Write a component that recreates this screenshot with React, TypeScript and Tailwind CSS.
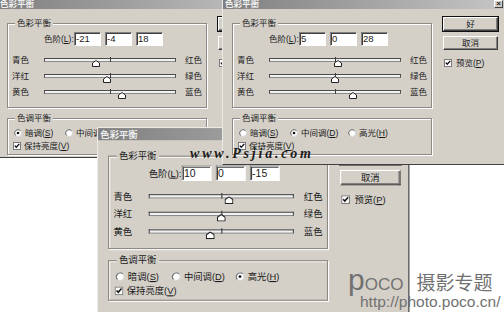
import React from "react";

type DialogProps = {
  values: [number, number, number];
  tone: number;
  className: string;
};

const sliderRows = [
  ["青色", "红色"],
  ["洋红", "绿色"],
  ["黄色", "蓝色"],
];

function CheckBox() {
  return (
    <svg width="8" height="8" viewBox="0 0 8 8" className="shrink-0">
      <rect x="0.5" y="0.5" width="7" height="7" fill="#fff" stroke="#7a7a7a" />
      <path d="M1.8 3.6 L3.3 5.3 L6.3 1.9" fill="none" stroke="#111" strokeWidth="1.4" />
    </svg>
  );
}

function Radio({ on }: { on: boolean }) {
  return (
    <svg width="8" height="8" viewBox="0 0 8 8" className="shrink-0">
      <circle cx="4" cy="4" r="3.5" fill="#fff" stroke="#d8d8d8" />
      <path d="M1.53 6.47 A3.5 3.5 0 0 1 6.47 1.53" fill="none" stroke="#6a6a6a" />
      {on && <circle cx="4" cy="4" r="1.3" fill="#111" />}
    </svg>
  );
}

function Slider({ value }: { value: number }) {
  return (
    <div className="relative w-[132px] h-[4px]">
      <div className="h-full border border-[#4a4a4a] border-b-[#8a8a8a] bg-[#f2f2f2]" />
      <div className="absolute left-[66px] top-[-1px] w-px h-[5px] bg-[#3a3a3a]" />
      <svg
        width="8"
        height="7"
        viewBox="0 0 8 7"
        className="absolute top-[2px]"
        style={{ left: 66 + value * 0.66 - 4 }}
      >
        <path d="M4 0.5 L7.5 3 L7.5 6.5 L0.5 6.5 L0.5 3 Z" fill="#fff" stroke="#222" />
      </svg>
    </div>
  );
}

function Button({ label, primary }: { label: string; primary?: boolean }) {
  return (
    <div
      className={`w-[55px] h-[14px] flex items-center justify-center bg-[#d4d0c8] border border-t-white border-l-white border-r-[#404040] border-b-[#404040] text-[8.5px] leading-none ${
        primary
          ? "shadow-[0_0_0_1px_#111,inset_-1px_-1px_0_#808080]"
          : "shadow-[inset_-1px_-1px_0_#808080]"
      }`}
    >
      {label}
    </div>
  );
}

function Dialog({ values, tone, className }: DialogProps) {
  const tones = [
    ["暗调(", "S", ")", "w-[51px]"],
    ["中间调(", "D", ")", "w-[58px]"],
    ["高光(", "H", ")", ""],
  ];
  return (
    <div
      className={`absolute w-[284px] bg-[#d4d0c8] border border-t-[#ebe9e4] border-l-[#ebe9e4] border-r-[#404040] border-b-[#404040] text-[#1a1a1a] ${className}`}
    >
      <div className="h-[11px] flex items-end justify-between px-[2px] pb-[1px] bg-linear-to-r from-[#808080] to-[#c6c6c6]">
        <span className="text-[8.5px] leading-none font-bold text-[#eeeeee]">色彩平衡</span>
        <div className="w-[9px] h-[8px] flex items-center justify-center bg-[#d4d0c8] border border-t-white border-l-white border-r-[#404040] border-b-[#404040] text-[8px] leading-none font-bold">
          ×
        </div>
      </div>

      <div className="flex pl-[9px]">
        <div className="w-[200px] pt-[9px]">
          <fieldset className="w-[200px] border border-[#8d8a85] shadow-[1px_1px_0_#fff,inset_1px_1px_0_#fff] pb-[7px]">
            <legend className="ml-[7px] px-[2px] text-[8.5px] leading-[10px] bg-[#d4d0c8]">色彩平衡</legend>
            <div className="mt-[4px] h-[14px] flex items-center pl-[36px]">
              <span className="w-[30px] text-[8.5px] leading-none whitespace-nowrap">
                色阶(<span className="underline">L</span>):
              </span>
              <div className="flex gap-[4px]">
                {values.map((v, i) => (
                  <div
                    key={i}
                    className="w-[27px] h-[14px] bg-white border border-t-[#808080] border-l-[#808080] border-b-white border-r-white shadow-[inset_1px_1px_0_#404040] pl-[1px] text-[9.5px] leading-[12px]"
                  >
                    {v}
                  </div>
                ))}
              </div>
            </div>
            <div className="mt-[6px]">
              {sliderRows.map(([left, right], i) => (
                <div key={left} className="h-[16px] flex items-center pl-[4px]">
                  <span className="w-[32px] text-[8.5px] leading-none">{left}</span>
                  <Slider value={values[i]} />
                  <span className="ml-[9px] text-[8.5px] leading-none">{right}</span>
                </div>
              ))}
            </div>
          </fieldset>

          <fieldset className="mt-[5px] w-[200px] border border-[#8d8a85] shadow-[1px_1px_0_#fff,inset_1px_1px_0_#fff] pb-[2px]">
            <legend className="ml-[7px] px-[2px] text-[8.5px] leading-[10px] bg-[#d4d0c8]">色调平衡</legend>
            <div className="mt-[4px] h-[12px] flex items-center pl-[6px]">
              {tones.map(([a, k, b, w], i) => (
                <div key={k} className={`flex items-center gap-[3px] ${w}`}>
                  <Radio on={i === tone} />
                  <span className="text-[8.5px] leading-none whitespace-nowrap">
                    {a}
                    <span className="underline">{k}</span>
                    {b}
                  </span>
                </div>
              ))}
            </div>
            <div className="mt-[1px] h-[12px] flex items-center gap-[3px] pl-[5px]">
              <CheckBox />
              <span className="text-[8.5px] leading-none">
                保持亮度(<span className="underline">V</span>)
              </span>
            </div>
          </fieldset>
        </div>

        <div className="ml-[11px] pt-[8px] flex flex-col">
          <Button label="好" primary />
          <div className="mt-[5px]">
            <Button label="取消" />
          </div>
          <div className="mt-[7px] ml-[1px] h-[12px] flex items-center gap-[4px]">
            <CheckBox />
            <span className="text-[8.5px] leading-none">
              预览(<span className="underline">P</span>)
            </span>
          </div>
        </div>
      </div>
    </div>
  );
}

export default function App() {
  return (
    <div className="relative w-[504px] h-[312px] overflow-hidden bg-white font-['Liberation_Sans','Noto_Sans_CJK_SC',sans-serif]">
      <Dialog values={[-21, -4, 18]} tone={0} className="left-[-3px] top-[-3px] h-[161px]" />
      <Dialog
        values={[10, 0, -15]}
        tone={2}
        className="left-[97px] top-[127px] h-[180px] origin-top-left scale-[1.1]"
      />
      <Dialog values={[5, 0, 28]} tone={1} className="left-[222px] top-[-3px] h-[168px]" />

      <div className="absolute left-[190px] top-[146px] font-['Liberation_Serif',serif] italic font-bold text-[14px] leading-[16px] tracking-[2.8px] text-[#1c1c1c]">
        www.Psjia.com
      </div>

      <div className="absolute left-[348px] top-[265px] text-[#717171]">
        <div className="flex items-baseline">
          <span className="text-[30px] leading-none">p</span>
          <span className="text-[17px] leading-none">OCO</span>
          <span className="ml-[13px] text-[19px] leading-none">摄影专题</span>
        </div>
        <div className="ml-[12px] -mt-[1px] text-[15.5px] leading-none">http://photo.poco.cn/</div>
      </div>
    </div>
  );
}
